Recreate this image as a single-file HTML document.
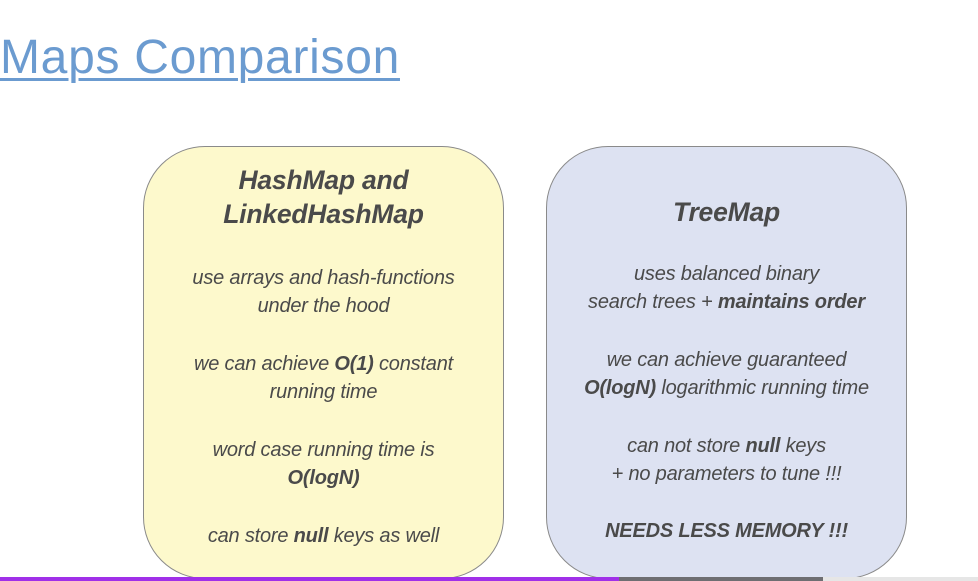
<!DOCTYPE html>
<html><head><style>
body{margin:0;width:978px;height:581px;overflow:hidden;background:#fff;font-family:"Liberation Sans",sans-serif;position:relative}
h1{position:absolute;left:0;top:30px;margin:0;font-weight:normal;font-size:48px;color:#6b9bd0;text-decoration:underline;text-decoration-thickness:3px;text-underline-offset:5px;letter-spacing:0.7px}
.box{position:absolute;top:146px;height:433px;border:1.5px solid #8a8a8a;border-radius:62px;text-align:center;color:#4a4a4a;font-style:italic;box-sizing:border-box}
.y{left:143px;width:361px;background:#fdf9cc}
.b{left:546px;width:361px;background:#dde2f2}
.t{position:absolute;left:-10px;right:-10px;font-size:20px;line-height:28px;letter-spacing:-0.2px}
.h{font-weight:bold;font-size:26.5px;line-height:34px}
.bar{position:absolute;top:577px;height:4px}
</style></head><body>
<h1>Maps Comparison</h1>
<div class="box y">
<div class="t h" style="top:16px">HashMap and<br>LinkedHashMap</div>
<div class="t" style="top:117px">use arrays and hash-functions<br>under the hood</div>
<div class="t" style="top:203px">we can achieve <b>O(1)</b> constant<br>running time</div>
<div class="t" style="top:289px">word case running time is<br><b>O(logN)</b></div>
<div class="t" style="top:375px">can store <b>null</b> keys as well</div>
</div>
<div class="box b">
<div class="t h" style="top:48px">TreeMap</div>
<div class="t" style="top:113px">uses balanced binary<br>search trees + <b>maintains order</b></div>
<div class="t" style="top:199px">we can achieve guaranteed<br><b>O(logN)</b> logarithmic running time</div>
<div class="t" style="top:285px">can not store <b>null</b> keys<br>+ no parameters to tune !!!</div>
<div class="t" style="top:370px"><b>NEEDS LESS MEMORY !!!</b></div>
</div>
<div class="bar" style="left:0;width:619px;background:#a030e8"></div>
<div class="bar" style="left:619px;width:204px;background:#6e6e72"></div>
<div class="bar" style="left:823px;width:155px;background:#e6e6e6"></div>
</body></html>
